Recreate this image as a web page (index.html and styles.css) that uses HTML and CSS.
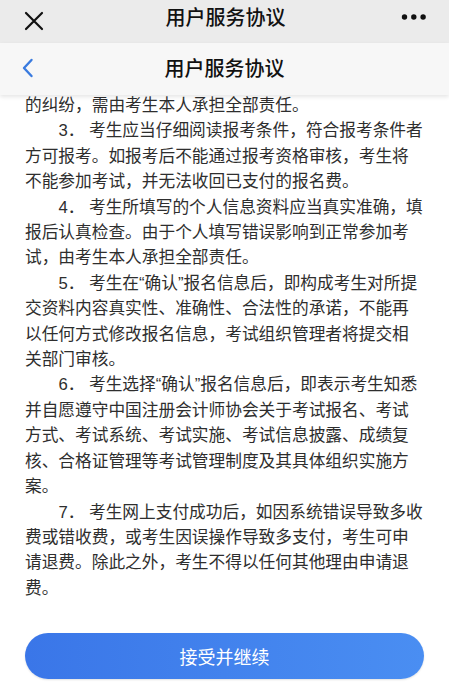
FILE: index.html
```html
<!DOCTYPE html>
<html lang="zh-CN">
<head>
<meta charset="utf-8">
<title>用户服务协议</title>
<link rel="stylesheet" href="styles.css">
</head>
<body>
<div class="page">
  <header class="topbar">
    <div class="tb-left">
      <svg class="icon-close" width="20" height="20" viewBox="0 0 20 20"><path d="M2 2 L18 18 M18 2 L2 18" stroke="#111" stroke-width="2.2" stroke-linecap="round" fill="none"/></svg>
    </div>
    <div class="tb-title">用户服务协议</div>
    <div class="tb-right">
      <svg class="icon-more" width="26" height="8" viewBox="0 0 26 8"><circle cx="3.5" cy="4" r="2.7" fill="#111"/><circle cx="12.8" cy="4" r="2.7" fill="#111"/><circle cx="22.1" cy="4" r="2.7" fill="#111"/></svg>
    </div>
  </header>
  <nav class="navbar">
    <div class="nb-left">
      <svg class="icon-back" width="12" height="20" viewBox="0 0 12 20"><path d="M9.5 2 L2 10 L9.5 18" stroke="#3a7bdf" stroke-width="2.4" stroke-linecap="round" stroke-linejoin="round" fill="none"/></svg>
    </div>
    <div class="nb-title">用户服务协议</div>
    <div class="nb-right"></div>
  </nav>
  <main class="content">
    <p class="para cont">的纠纷，需由考生本人承担全部责任。</p>
    <p class="para">3． 考生应当仔细阅读报考条件，符合报考条件者方可报考。如报考后不能通过报考资格审核，考生将不能参加考试，并无法收回已支付的报名费。</p>
    <p class="para">4． 考生所填写的个人信息资料应当真实准确，填报后认真检查。由于个人填写错误影响到正常参加考试，由考生本人承担全部责任。</p>
    <p class="para">5． 考生在“确认”报名信息后，即构成考生对所提交资料内容真实性、准确性、合法性的承诺，不能再以任何方式修改报名信息，考试组织管理者将提交相关部门审核。</p>
    <p class="para">6． 考生选择“确认”报名信息后，即表示考生知悉并自愿遵守中国注册会计师协会关于考试报名、考试方式、考试系统、考试实施、考试信息披露、成绩复核、合格证管理等考试管理制度及其具体组织实施方案。</p>
    <p class="para">7． 考生网上支付成功后，如因系统错误导致多收费或错收费，或考生因误操作导致多支付，考生可申请退费。除此之外，考生不得以任何其他理由申请退费。</p>
    <button class="accept">接受并继续</button>
  </main>
</div>
</body>
</html>
```

FILE: styles.css
```css
* { box-sizing: border-box; }
html, body { margin: 0; padding: 0; background: #ffffff; }
body {
  font-family: "Liberation Sans", "Noto Sans CJK SC", sans-serif;
  color: #333333;
  width: 449px;
  height: 688px;
  overflow: hidden;
}
.page { display: flex; flex-direction: column; }

.topbar {
  height: 43px;
  background: #ebebeb;
  display: grid;
  grid-template-columns: 1fr auto 1fr;
  align-items: center;
  padding: 0 22px 0 24px;
  position: relative;
  z-index: 2;
}
.tb-left { display: flex; align-items: center; }
.icon-close { display: block; margin-top: -2px; }
.tb-title {
  font-family: "Noto Sans CJK SC", sans-serif;
  font-size: 20px;
  font-weight: 500;
  color: #111;
  line-height: 26px;
  margin-top: -9px;
}
.tb-right { display: flex; justify-content: flex-end; margin-top: -10px; }
.icon-more { display: block; }

.navbar {
  height: 52px;
  background: #f7f7f7;
  display: grid;
  grid-template-columns: 1fr auto 1fr;
  align-items: center;
  padding: 0 22px;
  box-shadow: 0 2px 4px rgba(0, 0, 0, 0.10);
  position: relative;
  z-index: 2;
}
.nb-left { display: flex; align-items: center; }
.icon-back { display: block; margin-top: -2px; }
.nb-title {
  font-family: "Noto Sans CJK SC", sans-serif;
  font-size: 20px;
  font-weight: 500;
  color: #111;
  line-height: 26px;
  margin-top: -2px;
}

.content {
  padding: 0 25px;
  margin-top: -2px;
  position: relative;
  z-index: 1;
  display: flex;
  flex-direction: column;
}
.para {
  margin: 0;
  font-size: 16.7px;
  line-height: 25.4px;
  text-indent: 2em;
  color: #2e2e2e;
}
.para.cont { text-indent: 0; }

.accept {
  margin-top: 32px;
  height: 46px;
  width: 100%;
  border: none;
  border-radius: 23px;
  background: linear-gradient(90deg, #3a76e8 0%, #4a8ef2 100%);
  color: #ffffff;
  font-family: "Noto Sans CJK SC", sans-serif;
  font-size: 18px;
  font-weight: 400;
  padding: 0;
  box-shadow: 0 1px 2px rgba(0, 0, 0, 0.12);
}
```
